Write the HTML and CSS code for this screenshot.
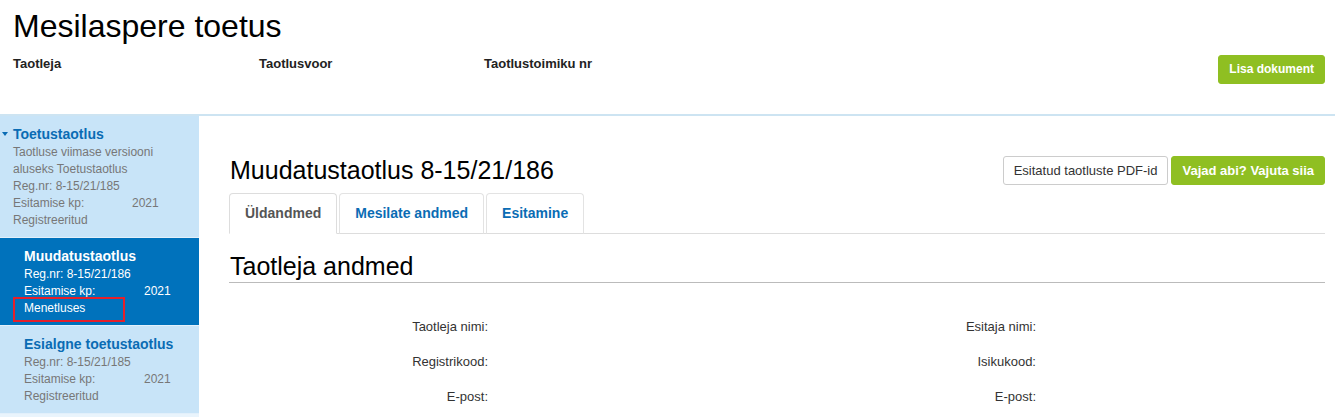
FILE: index.html
```html
<!DOCTYPE html>
<html lang="et">
<head>
    <meta charset="UTF-8">
    <meta name="viewport" content="width=device-width, initial-scale=1.0">
    <title>Mesilaspere toetus</title>
    <link rel="stylesheet" href="styles.css">
</head>
<body>
    <div class="pealis">
        <h1 class="pealkiri">Mesilaspere toetus</h1>
        <div class="pealis-rida">
            <div class="pealis-valjad">
                <div class="pealis-silt">Taotleja</div>
                <div class="pealis-silt">Taotlusvoor</div>
                <div class="pealis-silt">Taotlustoimiku nr</div>
            </div>
            <button type="button" class="nupp nupp-roheline nupp-lisa">Lisa dokument</button>
        </div>
    </div>

    <div class="sisu-ala">
        <!-- Vasak menüü taotlustega -->
        <div class="kylg">
            <div class="kylg-kirje kirje-ylem">
                <span class="nool"></span>
                <div class="kirje-nimi">Toetustaotlus</div>
                <div class="kirje-rida">Taotluse viimase versiooni</div>
                <div class="kirje-rida">aluseks Toetustaotlus</div>
                <div class="kirje-rida">Reg.nr: 8-15/21/185</div>
                <div class="kirje-rida"><span class="kp-silt">Esitamise kp:</span>2021</div>
                <div class="kirje-rida">Registreeritud</div>
            </div>
            <div class="kylg-kirje kirje-alam kirje-aktiivne">
                <div class="kirje-nimi">Muudatustaotlus</div>
                <div class="kirje-rida">Reg.nr: 8-15/21/186</div>
                <div class="kirje-rida"><span class="kp-silt">Esitamise kp:</span>2021</div>
                <div class="kirje-rida">Menetluses</div>
                <span class="margistus"></span>
            </div>
            <div class="kylg-kirje kirje-alam">
                <div class="kirje-nimi">Esialgne toetustaotlus</div>
                <div class="kirje-rida">Reg.nr: 8-15/21/185</div>
                <div class="kirje-rida"><span class="kp-silt">Esitamise kp:</span>2021</div>
                <div class="kirje-rida">Registreeritud</div>
            </div>
        </div>

        <div class="sisu">
            <div class="sisu-pealis">
                <h2 class="taotlus-pealkiri">Muudatustaotlus 8-15/21/186</h2>
                <div class="nupud">
                    <button type="button" class="nupp nupp-valge">Esitatud taotluste PDF-id</button>
                    <button type="button" class="nupp nupp-roheline nupp-abi">Vajad abi? Vajuta siia</button>
                </div>
            </div>

            <ul class="sakid">
                <li class="sakk aktiivne"><a href="#">Üldandmed</a></li>
                <li class="sakk"><a href="#">Mesilate andmed</a></li>
                <li class="sakk"><a href="#">Esitamine</a></li>
            </ul>

            <h3 class="osa-pealkiri">Taotleja andmed</h3>

            <div class="valjad">
                <div class="vali"><label>Taotleja nimi:</label><span></span></div>
                <div class="vali"><label>Esitaja nimi:</label><span></span></div>
                <div class="vali"><label>Registrikood:</label><span></span></div>
                <div class="vali"><label>Isikukood:</label><span></span></div>
                <div class="vali"><label>E-post:</label><span></span></div>
                <div class="vali"><label>E-post:</label><span></span></div>
            </div>
        </div>
    </div>
</body>
</html>
```

FILE: styles.css
```css
body {
    margin: 0;
    font-family: "Liberation Sans", Arial, sans-serif;
    color: #333;
    background-color: white;
}

.pealis {
    padding: 8px 10px 30px 13px;
    border-bottom: 2px solid #cde4f2;
}

.pealkiri {
    margin: 0;
    font-size: 32px;
    font-weight: normal;
    line-height: 36px;
    color: black;
}

.pealis-rida {
    display: flex;
    justify-content: space-between;
    align-items: flex-start;
    margin-top: 11px;
}

.pealis-valjad {
    display: grid;
    grid-template-columns: 246px 225px auto;
}

.pealis-silt {
    font-size: 13px;
    font-weight: bold;
    line-height: 18px;
    color: #222;
}

.nupp {
    font-family: "Liberation Sans", Arial, sans-serif;
    font-size: 13px;
    line-height: 17px;
    padding: 5px 11px;
    border-radius: 3px;
    border: 1px solid transparent;
    cursor: pointer;
}

.nupp-roheline {
    background-color: #8fbf22;
    border-color: #8fbf22;
    color: white;
    font-weight: bold;
}

.nupp-lisa {
    font-size: 12px;
    padding: 5px 10px;
}

.nupp-abi {
    padding: 5px 10px;
}

.nupp-valge {
    background-color: white;
    border-color: #ccc;
    color: #333;
    padding: 5px 10px;
}

.sisu-ala {
    display: flex;
    min-height: 301px;
}

/* külgmenüü */
.kylg {
    width: 199px;
    flex-shrink: 0;
    background-color: #e9f4fc;
}

.kylg-kirje {
    position: relative;
    background-color: #c8e4f8;
    padding: 8px 10px 8px 24px;
    border-bottom: 1px solid #e2f0fb;
    font-size: 12px;
    line-height: 17px;
    color: #777;
}

.kirje-ylem {
    padding-left: 13px;
}

.kirje-nimi {
    font-size: 14px;
    font-weight: bold;
    line-height: 20px;
    color: #0a6cb4;
}

.nool {
    position: absolute;
    left: 2px;
    top: 16px;
    border-left: 3px solid transparent;
    border-right: 3px solid transparent;
    border-top: 4px solid #0a6cb4;
}

.kp-silt {
    display: inline-block;
    width: 120px;
}

.kirje-ylem .kp-silt {
    width: 119px;
}

.kirje-aktiivne {
    background-color: #0072bc;
    color: white;
}

.kirje-aktiivne .kirje-nimi {
    color: white;
}

.margistus {
    position: absolute;
    left: 13px;
    top: 59px;
    width: 108px;
    height: 21px;
    border: 2px solid #e6202a;
}

/* sisu */
.sisu {
    flex: 1;
    padding: 40px 10px 0 30px;
}

.sisu-pealis {
    display: flex;
    justify-content: space-between;
    align-items: center;
}

.taotlus-pealkiri {
    margin: 0 0 0 1px;
    font-size: 25px;
    font-weight: normal;
    line-height: 27px;
    color: black;
}

.nupud {
    display: flex;
    gap: 3px;
}

.sakid {
    list-style: none;
    margin: 8px 0 0 0;
    padding: 0;
    display: flex;
    border-bottom: 1px solid #ddd;
}

.sakk {
    margin-right: 2px;
    margin-bottom: -1px;
}

.sakk a {
    display: block;
    padding: 9px 15px 10px;
    border: 1px solid #e3e3e3;
    border-bottom-color: #ddd;
    border-radius: 4px 4px 0 0;
    font-size: 14px;
    font-weight: bold;
    line-height: 20px;
    color: #0a6cb4;
    text-decoration: none;
}

.sakk.aktiivne a {
    color: #555;
    border-color: #ddd;
    border-bottom-color: white;
    background-color: white;
}

.osa-pealkiri {
    margin: 18px 0 0 0;
    padding: 0 0 1px 1px;
    font-size: 25px;
    font-weight: normal;
    line-height: 29px;
    color: black;
    border-bottom: 1px solid #bbb;
}

.valjad {
    display: grid;
    grid-template-columns: 1fr 1fr;
    margin-top: 34px;
}

.vali {
    display: grid;
    grid-template-columns: 1fr 1fr;
    margin-bottom: 15px;
    font-size: 13px;
    line-height: 20px;
}

.vali label {
    text-align: right;
    padding-right: 15px;
    color: #333;
}
```
